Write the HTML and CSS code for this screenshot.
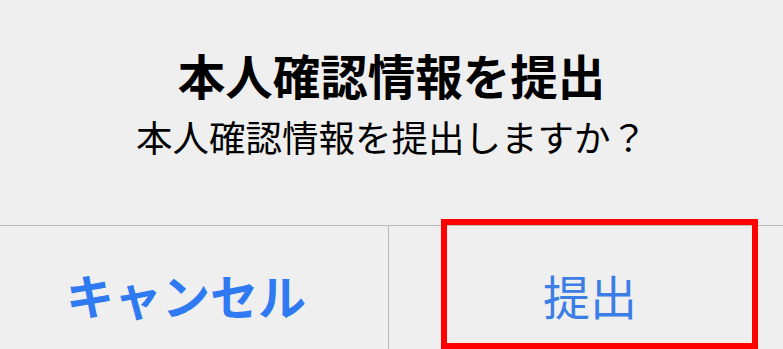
FILE: index.html
```html
<!DOCTYPE html>
<html>
    <head>
        <title>本人確認情報を提出</title>
        <link rel="stylesheet" href="styles.css">
    </head>
    <body>
        <div class="alert">
            <div class="alert-head">
                <h2 class="alert-title">本人確認情報を提出</h2>
                <p class="alert-message">本人確認情報を提出しますか？</p>
            </div>

            <div class="alert-actions">
                <button class="action action-cancel">キャンセル</button>
                <button class="action action-submit">
                    提出
                    <span class="highlight" aria-hidden="true"></span>
                </button>
            </div>
        </div>
    </body>
</html>
```

FILE: styles.css
```css
:root {
    --bg: #efefef;
    --divider: #b9b9b9;
    --blue: #2f7af2;
    --blue-light: #3b7ee6;
    --mark: #ff0000;
}

body {
    margin: 0;
    width: 783px;
    height: 349px;
    overflow: hidden;
    background-color: var(--bg);
    font-family: 'Noto Sans CJK JP', 'Noto Sans', sans-serif;
    color: #000;
}

.alert-head {
    box-sizing: border-box;
    height: 225px;
    padding-top: 51px;
    text-align: center;
}

.alert-title {
    margin: 0;
    font-size: 47.5px;
    font-weight: 700;
    line-height: 1;
}

.alert-message {
    margin: 20px 0 0 0;
    font-size: 36.5px;
    font-weight: 400;
    line-height: 1;
}

.alert-actions {
    display: flex;
    height: 136px;
    border-top: 1px solid var(--divider);
}

.action {
    display: flex;
    align-items: center;
    justify-content: center;
    margin: 0;
    padding: 0;
    border: none;
    background: none;
    font-family: inherit;
    line-height: 1;
    cursor: pointer;
}

.action-cancel {
    box-sizing: border-box;
    width: 389px;
    padding-right: 16px;
    border-right: 1px solid var(--divider);
    color: var(--blue);
    font-size: 48px;
    font-weight: 700;
}

.action-submit {
    position: relative;
    flex: 1;
    padding-left: 8px;
    color: var(--blue-light);
    font-size: 47px;
    font-weight: 400;
}

/* red annotation frame drawn over the button */
.highlight {
    position: absolute;
    left: 52px;
    top: -7px;
    width: 317px;
    height: 130px;
    box-sizing: border-box;
    border: 6px solid var(--mark);
}
```
